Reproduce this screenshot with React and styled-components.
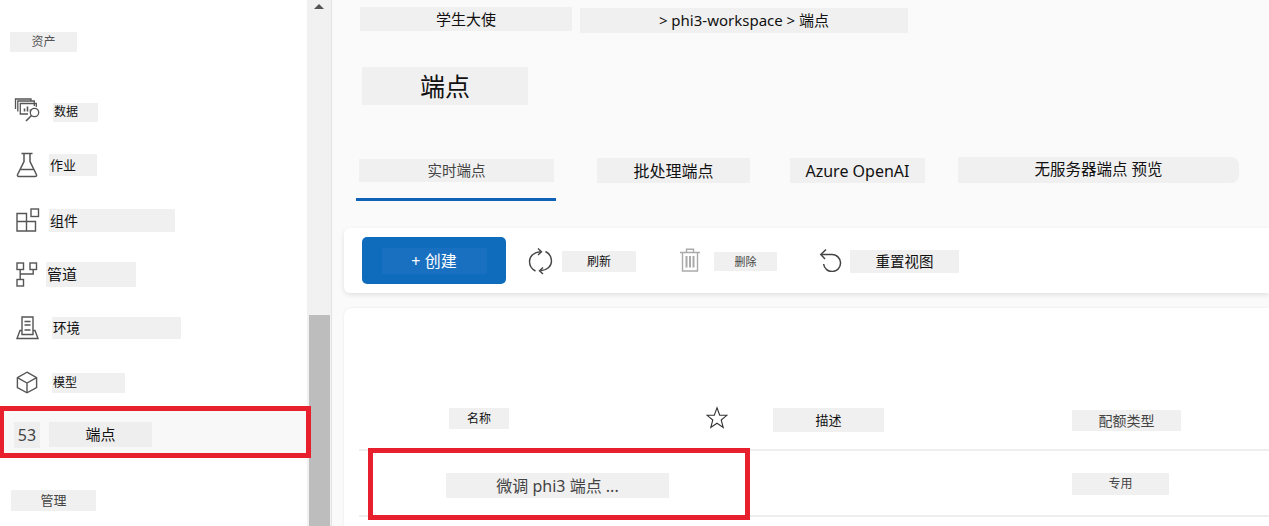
import styled, { createGlobalStyle } from 'styled-components';

const GlobalStyle = createGlobalStyle`
    html, body {
        margin: 0;
        height: 100%;
        overflow: hidden;
        background: #ffffff;
    }
    body {
        font-family: "Noto Sans", "Noto Sans CJK SC", sans-serif;
        color: #222222;
    }
`;

const Page = styled.div`
    display: flex;
    width: 1269px;
    height: 526px;
    overflow: hidden;
`;

const Sidebar = styled.nav`
    flex: 0 0 307px;
    min-width: 0;
    display: flex;
    flex-direction: column;
    padding-top: 32px;
    box-sizing: border-box;
    background: #ffffff;
`;

/* grey strip that sits behind every label in the screenshot */
const Label = styled.span`
    display: flex;
    flex: 0 0 auto;
    align-items: center;
    justify-content: ${(p) => p.$align || 'center'};
    box-sizing: border-box;
    width: ${(p) => p.$w}px;
    height: ${(p) => p.$h}px;
    margin-left: ${(p) => p.$ml || 0}px;
    margin-top: ${(p) => p.$mt || 0}px;
    padding-left: ${(p) => p.$pl || 0}px;
    background: ${(p) => p.$bg || '#f0f0f0'};
    color: ${(p) => p.$color || '#111111'};
    font-size: ${(p) => p.$size || 14}px;
    line-height: 1;
    white-space: nowrap;
`;

const SectionTitle = styled(Label)`
    margin-left: 10px;
`;

const NavList = styled.div`
    display: flex;
    flex-direction: column;
    margin-top: 32px;
`;

const NavRow = styled.div`
    display: flex;
    align-items: center;
    height: 54.3px;
`;

const NavIcon = styled.span`
    display: flex;
    flex: 0 0 auto;
    margin-left: ${(p) => p.$ml || 16}px;
    color: #555555;
`;

const ActiveRow = styled.div`
    position: relative;
    z-index: 1;
    display: flex;
    align-items: center;
    box-sizing: border-box;
    width: 311px;
    height: 52px;
    margin-top: -4px;
    padding-top: 6px;
    background: #f8f8f8;
    border: 5px solid #e8202e;
    border-left-width: 4px;
`;

const ManageTitle = styled(Label)`
    margin-top: 32px;
    margin-left: 11px;
`;

const ScrollTrack = styled.div`
    flex: 0 0 25px;
    display: flex;
    flex-direction: column;
    box-sizing: border-box;
    background: #f1f1f1;
    border-right: 1px solid #e4e4e4;
`;

const ScrollArrow = styled.span`
    width: 0;
    height: 0;
    margin: 4px 0 0 7px;
    border-left: 5.5px solid transparent;
    border-right: 5.5px solid transparent;
    border-bottom: 5px solid #555555;
`;

const ScrollThumb = styled.div`
    width: 21px;
    height: 211px;
    margin: auto 0 0 2px;
    background: #bdbdbd;
`;

const Main = styled.main`
    flex: 1;
    display: flex;
    flex-direction: column;
    min-width: 0;
    padding-top: 7px;
    box-sizing: border-box;
    background: #fafafa;
`;

const Crumbs = styled.div`
    display: flex;
    align-items: flex-start;
    gap: 8px;
    height: 26px;
    padding-left: 28px;
`;

const PageTitle = styled(Label)`
    margin: 34px 0 0 30px;
    font-weight: 400;
`;

const Tabs = styled.div`
    display: flex;
    align-items: flex-start;
    height: 44px;
    margin-top: 52px;
    padding-left: 24px;
`;

const ActiveTab = styled.div`
    flex: 0 0 200px;
    box-sizing: border-box;
    height: 44px;
    padding: 2px 0 0 3px;
    border-bottom: 3px solid #0f62b8;
`;

const PreviewTab = styled(Label)`
    border-radius: 0 8px 8px 0;
`;

const Toolbar = styled.div`
    display: flex;
    align-items: center;
    flex: 0 0 65px;
    margin: 27px 0 0 12px;
    padding-left: 18px;
    background: #ffffff;
    border-radius: 6px 0 0 6px;
    box-shadow: 0 2px 5px rgba(0, 0, 0, 0.1);
`;

const CreateButton = styled.button`
    display: flex;
    align-items: center;
    justify-content: center;
    width: 144px;
    height: 47px;
    padding: 0;
    border: 0;
    border-radius: 5px;
    background: #0f6cbd;
    font-family: inherit;
`;

const ToolIcon = styled.span`
    display: flex;
    flex: 0 0 auto;
    margin-left: ${(p) => p.$ml}px;
    margin-top: ${(p) => p.$mt || 0}px;
    color: ${(p) => p.$color || '#444444'};
`;

const TableCard = styled.section`
    flex: 1;
    margin: 15px 0 0 12px;
    background: #ffffff;
    border-radius: 8px 0 0 0;
    box-shadow: 0 0 3px rgba(0, 0, 0, 0.08);
`;

const TableRow = styled.div`
    position: relative;
    display: grid;
    grid-template-columns: 348px 66px 299px 1fr;
    box-sizing: border-box;
    height: ${(p) => p.$h}px;
    margin-left: 15px;
    padding-top: ${(p) => p.$pt}px;
    align-items: start;
    border-bottom: 2px solid #eeeeee;
`;

const StarCell = styled.span`
    display: flex;
    margin-top: -2px;
    margin-left: -1px;
`;

const RowHighlight = styled.div`
    position: absolute;
    left: 9px;
    top: -3px;
    width: 382px;
    height: 72px;
    box-sizing: border-box;
    border: 5px solid #e8202e;
    pointer-events: none;
`;

const DataIcon = () => (
    <svg width="26" height="26" viewBox="0 0 26 26" fill="none" stroke="currentColor" strokeWidth="1.3">
        <path d="M1.500 11V1h15.500v2" />
        <path d="M3.800 13.500V3h16.500v5" />
        <path d="M14 16H6.300V5.500h16V9" />
        <path d="M10.500 13.500v-3M13.500 13.500V8.500M16.500 13.500v-2" strokeWidth="1.600" />
        <circle cx="20.500" cy="14.500" r="4.200" />
        <path d="M17.500 17.500L12 23" strokeWidth="1.600" />
    </svg>
);

const FlaskIcon = () => (
    <svg width="22" height="26" viewBox="0 0 22 26" fill="none" stroke="currentColor" strokeWidth="1.5">
        <path d="M5.500 1.500h11M8 1.500v8L1.600 22.500c-.6 1.300.2 2 1.400 2h16c1.200 0 2-.7 1.400-2L14 9.500v-8" />
        <path d="M4.500 17.500h13" />
    </svg>
);

const BlocksIcon = () => (
    <svg width="24" height="24" viewBox="0 0 24 24" fill="none" stroke="currentColor" strokeWidth="1.4">
        <path d="M1 5.500h9.500v8H19.500v9.500H1zM1 13.500h9.500V23" />
        <rect x="15" y="1" width="7.500" height="7.500" />
    </svg>
);

const PipelineIcon = () => (
    <svg width="22" height="25" viewBox="0 0 22 25" fill="none" stroke="currentColor" strokeWidth="1.4">
        <rect x="1" y="1" width="6.500" height="6.500" />
        <rect x="14" y="1" width="6.500" height="6.500" />
        <rect x="1" y="17.500" width="6.500" height="6.500" />
        <path d="M4.200 7.500v10M17.200 7.500v4.500H4.200" />
    </svg>
);

const EnvIcon = () => (
    <svg width="23" height="24" viewBox="0 0 23 24" fill="none" stroke="currentColor" strokeWidth="1.4">
        <path d="M6 18.500V1h11v17.500z" />
        <path d="M8.500 5.500h6M8.500 9h6M8.500 14h6" strokeWidth="1.600" />
        <path d="M6 14.500H4L1 22.500h21l-3-8h-2" />
    </svg>
);

const CubeIcon = () => (
    <svg width="22" height="23" viewBox="0 0 22 23" fill="none" stroke="currentColor" strokeWidth="1.4">
        <path d="M11 1.200l9.600 5.400v10L11 21.800 1.400 16.600v-10z" />
        <path d="M1.400 6.600L11 12l9.600-5.400M11 12v9.800" />
    </svg>
);

const RefreshIcon = () => (
    <svg width="25" height="30" viewBox="0 0 25 30" fill="none" stroke="currentColor" strokeWidth="1.4">
        <path d="M7.500 25C3.500 23 1.500 19.500 1.500 15.500 1.500 10 6 6.200 12.500 5.800" />
        <path d="M10 2.500L13.500 5.800 10 9" />
        <path d="M17.500 5.500c4 2 6 5.500 6 9.500 0 5.500-4.500 9.500-11 9.800" />
        <path d="M15 21.500l-3.500 3.300 3.500 3.200" />
    </svg>
);

const TrashIcon = () => (
    <svg width="20" height="24" viewBox="0 0 20 24" fill="none" stroke="currentColor" strokeWidth="1.4">
        <path d="M0 4.500h20M6.500 4.500V1.200h7v3.300" />
        <path d="M2.500 4.500V23h15V4.500" />
        <path d="M6.500 8v11.500M10 8v11.500M13.500 8v11.500" strokeWidth="2" />
    </svg>
);

const UndoIcon = () => (
    <svg width="24" height="24" viewBox="0 0 24 24" fill="none" stroke="currentColor" strokeWidth="1.500">
        <path d="M2.500 6.500H13a8.500 8.500 0 1 1-8.400 9.500" />
        <path d="M7 1.500L1.800 6.500 6 11" />
    </svg>
);

const StarIcon = () => (
    <svg width="22" height="23" viewBox="0 0 22 23" fill="none" stroke="#333333" strokeWidth="1.1">
        <path d="M11 1.800l2.700 7.300 7.200.2-5.700 4.700 2 7.500L11 17.200l-6.200 4.300 2-7.500L1.100 9.300l7.200-.2z" />
    </svg>
);

const navItems = [
    { icon: <DataIcon />, iconLeft: 14, text: '数据', w: 45, h: 19, ml: 13, size: 12, mt: 2, pl: 1 },
    { icon: <FlaskIcon />, iconLeft: 16, text: '作业', w: 48, h: 22, ml: 11, size: 13, pl: 1 },
    { icon: <BlocksIcon />, iconLeft: 16, text: '组件', w: 126, h: 23, ml: 9, size: 14, mt: 2, pl: 1 },
    { icon: <PipelineIcon />, iconLeft: 16, text: '管道', w: 90, h: 25, ml: 8, size: 15, pl: 1 },
    { icon: <EnvIcon />, iconLeft: 16, text: '环境', w: 129, h: 22, ml: 13, size: 13.5, pl: 1 },
    { icon: <CubeIcon />, iconLeft: 16, text: '模型', w: 73, h: 20, ml: 14, size: 12, pl: 1 },
];

export default function App() {
    return (
        <>
            <GlobalStyle />
            <Page>
                <Sidebar>
                    <SectionTitle $w={67} $h={20} $size={12} $color="#555555">资产</SectionTitle>
                    <NavList>
                        {navItems.map((item) => (
                            <NavRow key={item.text}>
                                <NavIcon $ml={item.iconLeft}>{item.icon}</NavIcon>
                                <Label
                                    $w={item.w}
                                    $h={item.h}
                                    $ml={item.ml}
                                    $mt={item.mt}
                                    $pl={item.pl}
                                    $size={item.size}
                                    $align="flex-start"
                                >
                                    {item.text}
                                </Label>
                            </NavRow>
                        ))}
                    </NavList>
                    <ActiveRow>
                        <Label $w={26} $h={26} $ml={10} $size={16} $color="#444444" $bg="#eeeeee">53</Label>
                        <Label $w={103} $h={25} $ml={9} $size={15} $bg="#eeeeee">端点</Label>
                    </ActiveRow>
                    <ManageTitle $w={85} $h={21} $size={13} $color="#444444">管理</ManageTitle>
                </Sidebar>

                <ScrollTrack>
                    <ScrollArrow />
                    <ScrollThumb />
                </ScrollTrack>

                <Main>
                    <Crumbs>
                        <Label $w={212} $h={24} $size={15}>学生大使</Label>
                        <Label $w={328} $h={25} $mt={1} $size={15}>{'> phi3-workspace > 端点'}</Label>
                    </Crumbs>

                    <PageTitle as="h1" $w={166} $h={38} $size={25}>端点</PageTitle>

                    <Tabs>
                        <ActiveTab>
                            <Label $w={195} $h={23} $size={14.5} $color="#444444">实时端点</Label>
                        </ActiveTab>
                        <Label $w={153} $h={25} $ml={41} $mt={1} $size={16}>批处理端点</Label>
                        <Label $w={135} $h={25} $ml={40} $mt={1} $size={16}>Azure OpenAI</Label>
                        <PreviewTab $w={281} $h={26} $ml={33} $size={15.5}>无服务器端点 预览</PreviewTab>
                    </Tabs>

                    <Toolbar>
                        <CreateButton>
                            <Label $w={105} $h={26} $size={16} $color="#ffffff" $bg="#1a70c0">+ 创建</Label>
                        </CreateButton>
                        <ToolIcon $ml={22}><RefreshIcon /></ToolIcon>
                        <Label $w={74} $h={21} $ml={9} $mt={2} $size={12}>刷新</Label>
                        <ToolIcon $ml={44} $mt={-1} $color="#aaaaaa"><TrashIcon /></ToolIcon>
                        <Label $w={63} $h={19} $ml={14} $mt={1} $size={11} $color="#444444">删除</Label>
                        <ToolIcon $ml={42} $mt={-2}><UndoIcon /></ToolIcon>
                        <Label $w={109} $h={23} $ml={7} $mt={1} $size={14.5}>重置视图</Label>
                    </Toolbar>

                    <TableCard>
                        <TableRow $h={143} $pt={100}>
                            <Label $w={60} $h={21} $ml={90} $size={12}>名称</Label>
                            <StarCell><StarIcon /></StarCell>
                            <Label $w={111} $h={24} $size={13}>描述</Label>
                            <Label $w={109} $h={21} $mt={2} $size={14} $color="#444444">配额类型</Label>
                        </TableRow>
                        <TableRow $h={66} $pt={22}>
                            <Label $w={223} $h={25} $ml={87} $size={16} $color="#444444">微调 phi3 端点 ...</Label>
                            <span />
                            <span />
                            <Label $w={97} $h={22} $size={12} $color="#444444">专用</Label>
                            <RowHighlight />
                        </TableRow>
                    </TableCard>
                </Main>
            </Page>
        </>
    );
}
